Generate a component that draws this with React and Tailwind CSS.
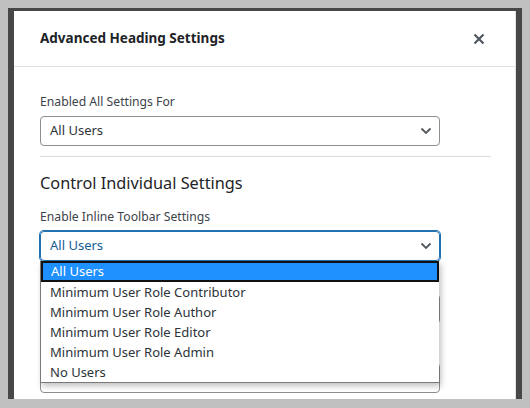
const options = [
  "All Users",
  "Minimum User Role Contributor",
  "Minimum User Role Author",
  "Minimum User Role Editor",
  "Minimum User Role Admin",
  "No Users",
];

const Chevron = () => (
  <svg width="12" height="8" viewBox="0 0 12 8" className="shrink-0">
    <path d="M1.5 1.5 L6 6 L10.5 1.5" fill="none" stroke="#50575e" strokeWidth="1.8" />
  </svg>
);

const SelectBox = ({ value, focused }) => (
  <div
    className={
      focused
        ? "w-[400px] h-[30px] rounded-[4px] border border-[#2271b1] shadow-[0_0_0_1px_#2271b1] flex items-center justify-between pl-[9px] pr-[7px] text-[13px] text-[#135e96]"
        : "w-[400px] h-[30px] rounded-[4px] border border-[#8c8f94] flex items-center justify-between pl-[9px] pr-[7px] text-[13px] text-[#2c3338]"
    }
  >
    <span>{value}</span>
    <Chevron />
  </div>
);

export default function App() {
  return (
    <div
      className="w-[530px] h-[408px] bg-[#c0c0c0] pt-2 px-2 overflow-hidden"
      style={{ fontFamily: '"Noto Sans", sans-serif' }}
    >
      <div className="h-[391px] bg-[#474747] px-[6px] pt-[3px] overflow-hidden">
        <div className="w-[502px] h-full bg-white border-r border-[#e2e2e2]">
          {/* header */}
          <div className="h-[56px] border-b border-[#e0e0e0] flex items-center justify-between pl-[26px] pr-[30px]">
            <h1 className="text-[13.5px] font-bold text-[#1d2327]">Advanced Heading Settings</h1>
            <svg width="12" height="12" viewBox="0 0 12 12">
              <path d="M1.5 1.5 L10.5 10.5 M10.5 1.5 L1.5 10.5" stroke="#50575e" strokeWidth="2.2" />
            </svg>
          </div>

          {/* body */}
          <div className="pl-[26px] pr-[24px] pt-[25px]">
            <p className="text-[12.2px] leading-5 text-[#3c434a] mb-[4px]">Enabled All Settings For</p>
            <SelectBox value="All Users" />

            <div className="border-t border-[#dcdcde] mt-[10px]" />

            <h2 className="text-[16.3px] leading-6 text-[#1d2327] mt-[14px]">Control Individual Settings</h2>

            <p className="text-[12.2px] leading-5 text-[#3c434a] mt-[12px] mb-[4px]">Enable Inline Toolbar Settings</p>
            <div className="relative">
              <SelectBox value="All Users" focused />

              {/* settings hidden behind the open list */}
              <div className="h-5 mt-[9px] mb-[4px]" />
              <div className="w-[400px] h-[30px] rounded-[4px] border border-[#8c8f94]" />
              <div className="h-5 mt-[15px] mb-[4px]" />
              <div className="w-[400px] h-[30px] rounded-[4px] border border-[#8c8f94]" />

              {/* open dropdown list */}
              <div className="absolute left-0 top-[30px] w-[399px] bg-white border-l border-b border-[#7a7a7a] shadow-[2px_3px_6px_rgba(0,0,0,0.25)] text-[13px] leading-5 text-[#2c3338]">
                {options.map((opt, i) => (
                  <div
                    key={opt}
                    className={
                      i === 0
                        ? "h-[21px] pl-[8px] bg-[#1e90ff] text-white border-2 border-[#111] leading-[17px]"
                        : "h-5 pl-[9px] leading-5"
                    }
                  >
                    {opt}
                  </div>
                ))}
              </div>
            </div>
          </div>
        </div>
      </div>
    </div>
  );
}
